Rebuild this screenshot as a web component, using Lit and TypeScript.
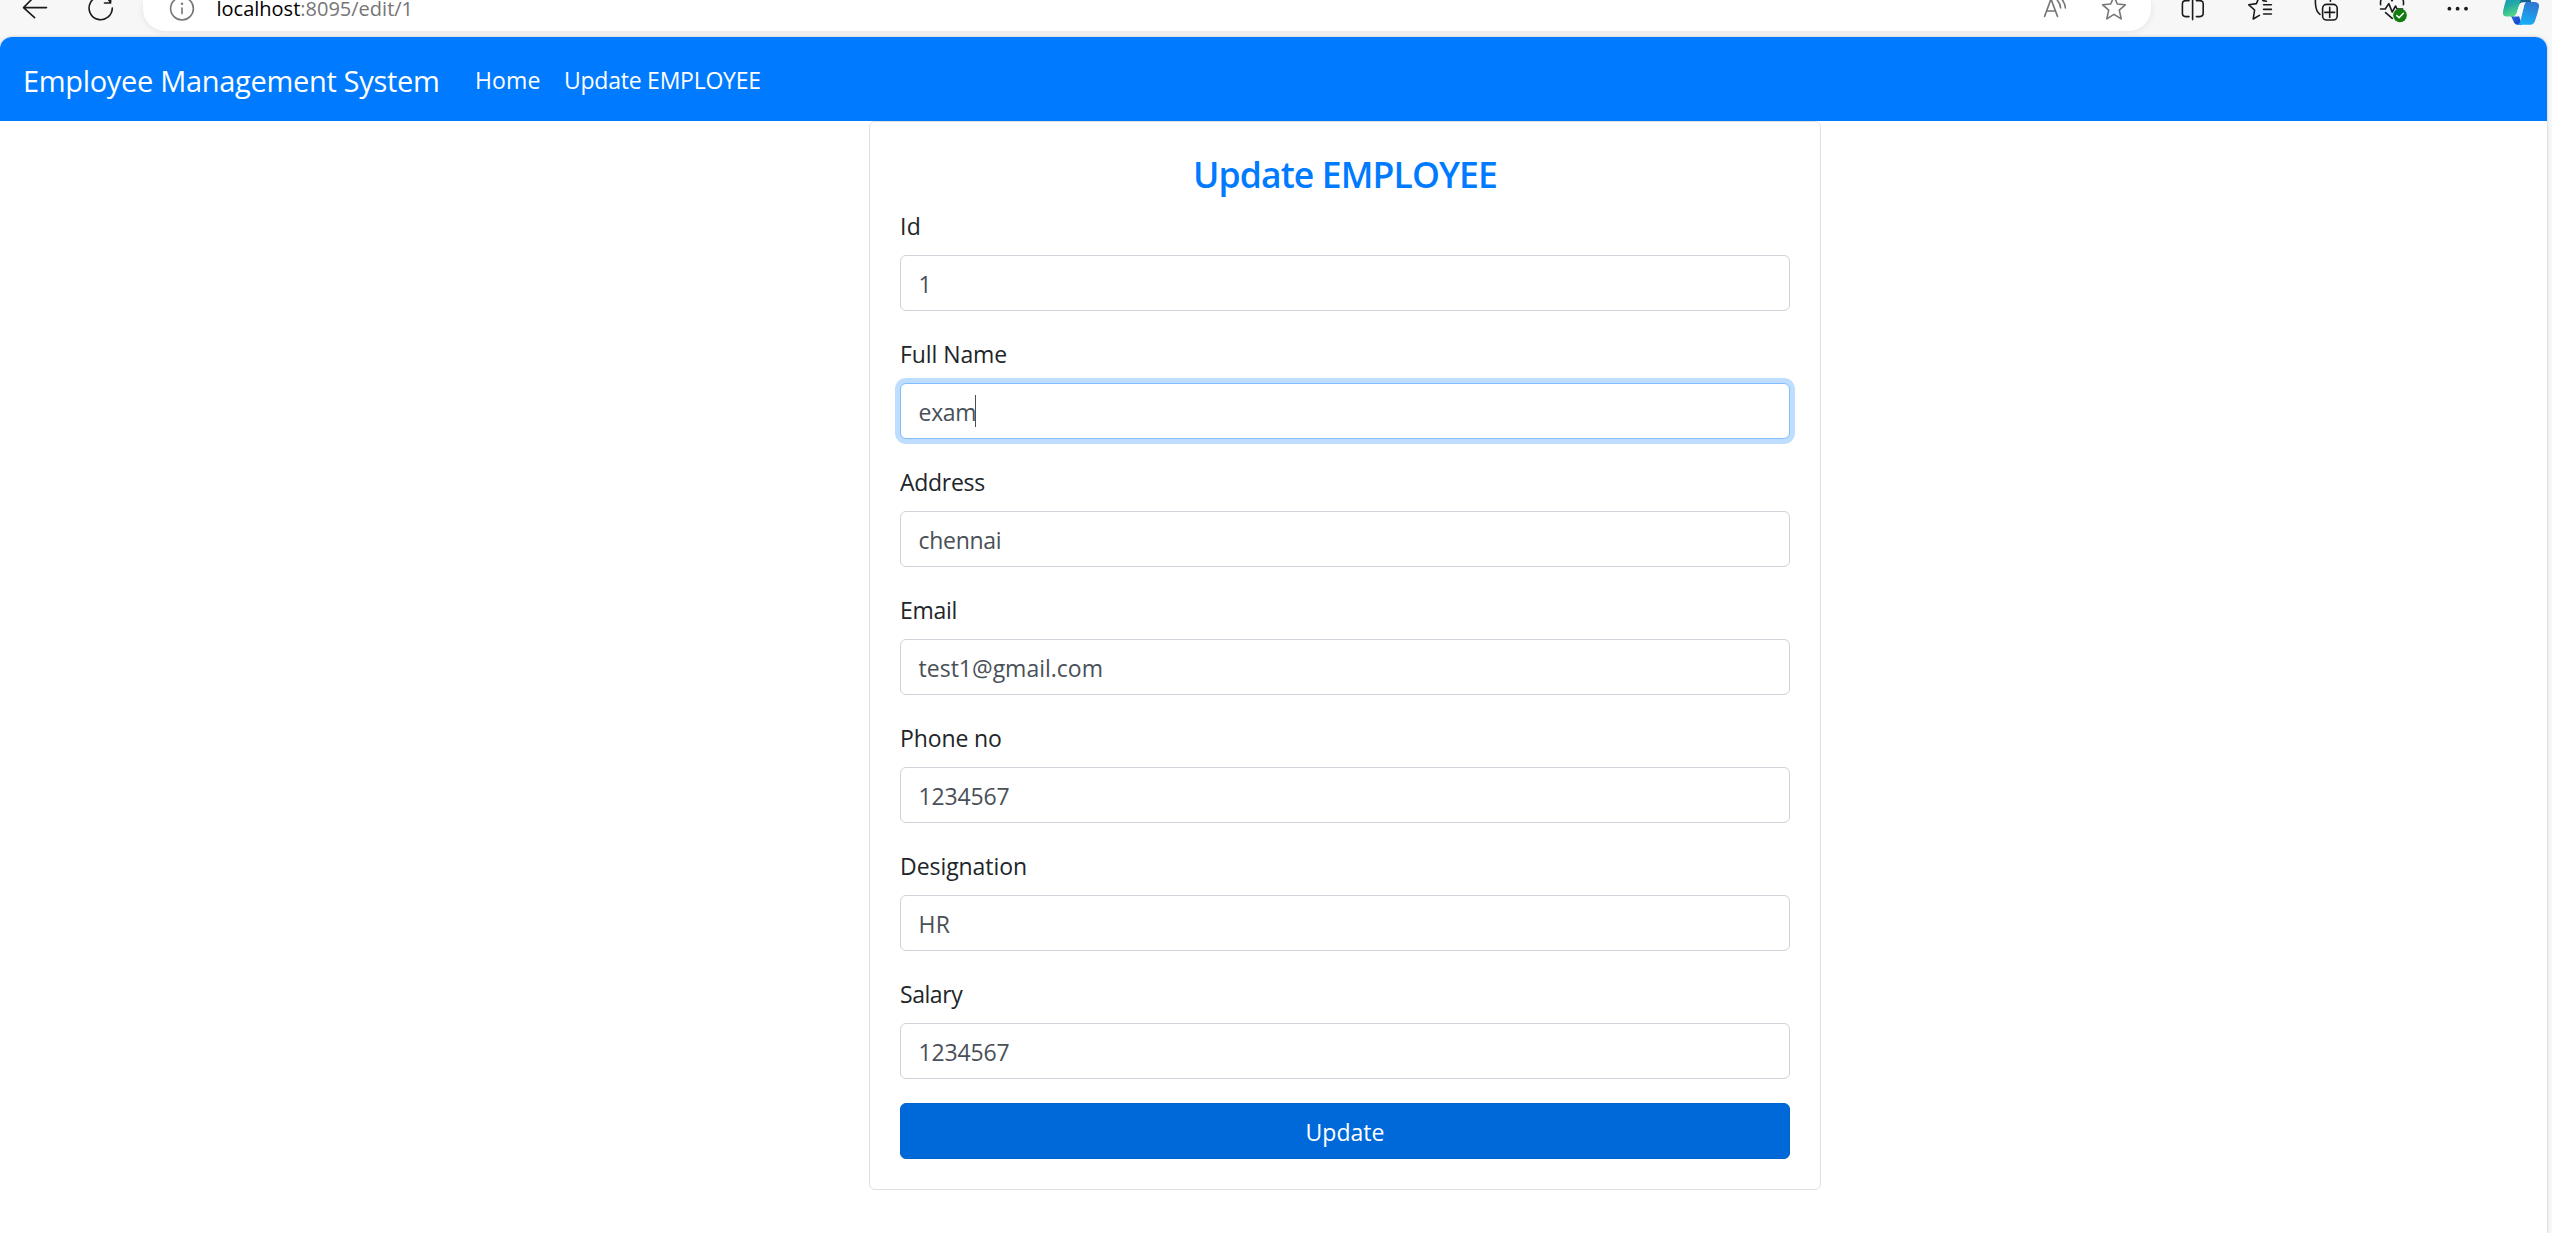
import { LitElement, html, css, svg, nothing, type TemplateResult } from "lit";
import { customElement, property } from "lit/decorators.js";
import { classMap } from "lit/directives/class-map.js";

/** One toolbar glyph; its drawing uses toolbar coordinates, starting at `x`. */
const glyph = (cls: string, x: number, w: number, body: TemplateResult | TemplateResult[]) =>
  html`<svg class="glyph ${cls}" width=${w} height="31" viewBox="${x} 0 ${w} 31">${body}</svg>`;

@customElement("browser-bar")
export class BrowserBar extends LitElement {
  static styles = css`
    :host {
      display: flex;
      height: 37px;
      background: #f7f7f7;
      overflow: hidden;
    }
    .glyph {
      flex: none;
      display: block;
      fill: none;
      stroke: #1b1b1b;
      stroke-width: 1.6;
      stroke-linecap: round;
      stroke-linejoin: round;
    }
    .grey { stroke: #767676; }
    .solid { fill: #1b1b1b; stroke: none; }
    .logo { stroke: none; }
    .nav {
      display: flex;
      gap: 26px;
      padding: 0 22px 0 15px;
    }
    .pill {
      display: flex;
      width: 2008px;
      height: 31px;
      background: #fff;
      border-radius: 0 0 22px 22px;
      box-shadow: 0 1px 6px rgba(0, 0, 0, 0.09);
    }
    .pill .info { margin-left: 19px; }
    .url {
      flex: 1;
      padding-left: 14.5px;
      font-size: 20px;
      line-height: 18px;
      color: #767676;
      white-space: pre;
    }
    .host { color: #000; }
    .pill .star { margin: 0 19px 0 28px; }
    .tools {
      display: flex;
      gap: 26px;
      padding-left: 22px;
    }
  `;

  render() {
    return html`
      <div class="nav">
        ${glyph("", 15, 40, svg`<path d="M23.5 7.6H46.5M35-4L23.5 7.6L34.6 17.6"/>`)}
        ${glyph("", 81, 40, svg`<path d="M112.3 8A11.6 11.6 0 1 1 108.5-.5L110.5 2.6M104.5 3H110.6V-4"/>`)}
      </div>
      <div class="pill">
        ${glyph("grey info", 162, 40, svg`<circle cx="182" cy="8.6" r="11.4"/><path d="M182 8V13.6" /><circle cx="182" cy="3.8" r=".5"/>`)}
        <div class="url"><span class="host">localhost</span>:8095/edit/1</div>
        ${glyph("grey", 2034, 34, svg`<path d="M2044.6 16.4L2051-1L2057.5 16.4M2046.8 11H2055.2M2057.4.4Q2060.4 3.6 2060.6 8M2060.8-2Q2065 2.6 2065.4 8"/>`)}
        ${glyph("grey star", 2096, 36, svg`<path d="M2114-3.6L2117.3 4L2125.3 4.8L2119.3 10.2L2121.2 18.9L2114 14.4L2106.8 18.9L2108.7 10.2L2102.7 4.8L2110.7 4Z"/>`)}
      </div>
      <div class="tools">
        ${glyph("", 2173, 40, svg`<path d="M2192.6-4V19.6M2189 .6H2185.6Q2182.4.6 2182.4 3.8V13Q2182.4 16.6 2185.6 16.6H2189M2196.4.6H2199.8Q2203.2.6 2203.2 3.8V13Q2203.2 16.6 2199.8 16.6H2196.4"/>`)}
        ${glyph("", 2239, 40, svg`<path d="M2266.4 1.2L2263 .6L2260-5L2256.4 3.6L2248.8 4.8L2254.6 10L2253.2 19L2259.4 15.4M2263.6 4.8H2271.4M2263.6 9.4H2271.4M2263.6 14H2271.4"/>`)}
        ${glyph("", 2305, 40, svg`<rect x="2322.6" y="4.4" width="14.6" height="15.6" rx="4"/><path d="M2329.7 7.4V17.4M2324.8 12.4H2334.6M2315.4-2V3Q2315.8 11.6 2320 14.4M2330.4-1V1.2"/>`)}
        ${glyph("", 2371, 40, svg`<path d="M2380.6 4.6Q2379.8-3 2386-3.6Q2389.8-3.6 2392 .8Q2394.2-3.6 2398-3.6Q2404.4-3 2403.4 4.6M2380.6 9H2385.2L2388.8 3.6L2392.2 12L2395.6 6L2397 9H2402.6M2385.6 12.6L2392.2 18.4"/>
          <circle cx="2400" cy="15.4" r="6.8" fill="#107c10" stroke="none"/><path d="M2396.8 15.6L2399.1 17.8L2403.4 13.2" stroke="#fff" stroke-width="1.5"/>`)}
        ${glyph("solid", 2437, 40, svg`<circle cx="2449.4" cy="8.7" r="1.9"/><circle cx="2457.6" cy="8.7" r="1.9"/><circle cx="2466" cy="8.7" r="1.9"/>`)}
        ${glyph("logo", 2503, 42, svg`
          <defs>
            <linearGradient id="a" x1="0" y1="0" x2=".35" y2="1"><stop offset="0" stop-color="#1a93c4"/><stop offset=".5" stop-color="#22a9a4"/><stop offset="1" stop-color="#52d68a"/></linearGradient>
            <linearGradient id="b" x1=".7" y1="0" x2=".4" y2="1"><stop offset="0" stop-color="#2f74d0"/><stop offset="1" stop-color="#18b0f8"/></linearGradient>
            <linearGradient id="c" x1="0" y1="0" x2="1" y2="1"><stop offset="0" stop-color="#2a6fd6"/><stop offset="1" stop-color="#1535c9"/></linearGradient>
          </defs>
          <path fill="#14618f" d="M2517-4H2529L2531.5 2.4H2524Q2520 2.4 2518.4 6Z"/>
          <path fill="url(#c)" d="M2511 16H2519L2522 24.8H2518.6Q2514.6 24.8 2513.6 21.4Z"/>
          <path fill="url(#a)" d="M2507.4-4H2522L2516.6 13.6Q2515.6 16.4 2512.6 16.4H2506.6Q2502.4 16.2 2503 11.6Q2504.4 4 2507.4-4Z"/>
          <path fill="url(#b)" d="M2526.2 2H2534.6Q2539.8 2.4 2539 7Q2537.4 14.6 2534.8 21.4Q2533.4 24.8 2529.6 24.8H2517.6Q2519.8 23.8 2520.6 20.6L2524.2 5Q2524.8 2.4 2526.2 2Z"/>
          <path fill="#f7f7f7" d="M2521.4 2.4H2526Q2524.8 3 2524.2 5L2521.8 14Q2521 16.4 2518 16.4H2512.6Q2515.6 16 2516.6 13.6L2519.2 5Q2519.8 3 2521.4 2.4Z"/>`)}
      </div>
    `;
  }
}

@customElement("form-field")
export class FormField extends LitElement {
  static styles = css`
    :host { display: block; }
    .label {
      padding-top: 2px;
      margin-bottom: 12px;
      line-height: 34px;
      color: #212529;
    }
    .control {
      box-sizing: border-box;
      display: flex;
      align-items: center;
      height: 56px;
      padding: 0 17.6px;
      border: 1px solid #ced4da;
      border-radius: 6px;
      background: #fff;
      color: #495057;
    }
    .value { padding-top: 2px; line-height: 32px; }
    .focused {
      border-color: #80bdff;
      box-shadow: 0 0 0 5px #bfdeff;
    }
    .caret {
      width: 1px;
      height: 32px;
      margin-left: -1px;
      background: #495057;
    }
  `;

  @property() label = "";
  @property() value = "";
  @property({ type: Number }) labelTracking = 0;
  @property({ type: Number }) valueTracking = 0;
  @property({ type: Boolean }) focused = false;

  render() {
    return html`
      <div class="label" style="letter-spacing:${this.labelTracking}px">${this.label}</div>
      <div class=${classMap({ control: true, focused: this.focused })}>
        <span class="value" style="letter-spacing:${this.valueTracking}px">${this.value}</span>
        ${this.focused ? html`<span class="caret"></span>` : nothing}
      </div>
    `;
  }
}

interface Field {
  label: string;
  value: string;
  lt: number;
  vt: number;
  focused?: boolean;
}

const FIELDS: Field[] = [
  { label: "Id", value: "1", lt: 0.4, vt: 0 },
  { label: "Full Name", value: "exam", lt: -0.08, vt: -0.35, focused: true },
  { label: "Address", value: "chennai", lt: -0.3, vt: -0.3 },
  { label: "Email", value: "test1@gmail.com", lt: -0.3, vt: 0 },
  { label: "Phone no", value: "1234567", lt: -0.12, vt: -0.15 },
  { label: "Designation", value: "HR", lt: -0.06, vt: 0.3 },
  { label: "Salary", value: "1234567", lt: -0.45, vt: -0.15 },
];

@customElement("app-root")
export class AppRoot extends LitElement {
  static styles = css`
    :host {
      display: block;
      height: 1233px;
      overflow: hidden;
      background: #f7f7f7;
      font-family: "Open Sans", "Noto Sans", sans-serif;
      font-size: 23px;
      color: #212529;
    }
    .page {
      width: 2547px;
      height: 1196px;
      border-radius: 12px 12px 0 0;
      background: #fff;
      box-shadow: 0 0 3px rgba(0, 0, 0, 0.25);
      overflow: hidden;
    }
    .navbar {
      box-sizing: border-box;
      display: flex;
      align-items: center;
      height: 84px;
      padding: 2px 0 0 23px;
      background: #007bff;
      color: #fff;
      white-space: nowrap;
    }
    .brand {
      width: 452px;
      font-size: 29px;
      letter-spacing: -0.32px;
    }
    .home { width: 89px; letter-spacing: 0.1px; }
    .current { letter-spacing: -0.24px; }
    .card {
      box-sizing: border-box;
      width: 952px;
      height: 1069px;
      margin-left: 869px;
      padding: 30px;
      border: 1px solid #dfdfdf;
      border-radius: 6px;
    }
    .title {
      margin: 0 0 12px;
      padding-top: 2px;
      line-height: 41px;
      font-size: 35.5px;
      font-weight: 600;
      letter-spacing: -0.88px;
      text-align: center;
      color: #007bff;
    }
    .fields {
      display: flex;
      flex-direction: column;
      gap: 24px;
    }
    .submit {
      display: block;
      box-sizing: border-box;
      width: 100%;
      height: 56px;
      margin-top: 24px;
      padding: 2px 0 0;
      border: 1px solid #0062cc;
      border-radius: 6px;
      background: #0069d9;
      color: #fff;
      font: inherit;
    }
  `;

  render() {
    return html`
      <browser-bar></browser-bar>
      <main class="page">
        <nav class="navbar">
          <span class="brand">Employee Management System</span>
          <span class="home">Home</span>
          <span class="current">Update EMPLOYEE</span>
        </nav>
        <section class="card">
          <h3 class="title">Update EMPLOYEE</h3>
          <div class="fields">
            ${FIELDS.map((f) => html`
              <form-field
                .label=${f.label}
                .value=${f.value}
                .labelTracking=${f.lt}
                .valueTracking=${f.vt}
                .focused=${!!f.focused}
              ></form-field>`)}
          </div>
          <button class="submit">Update</button>
        </section>
      </main>
    `;
  }
}
